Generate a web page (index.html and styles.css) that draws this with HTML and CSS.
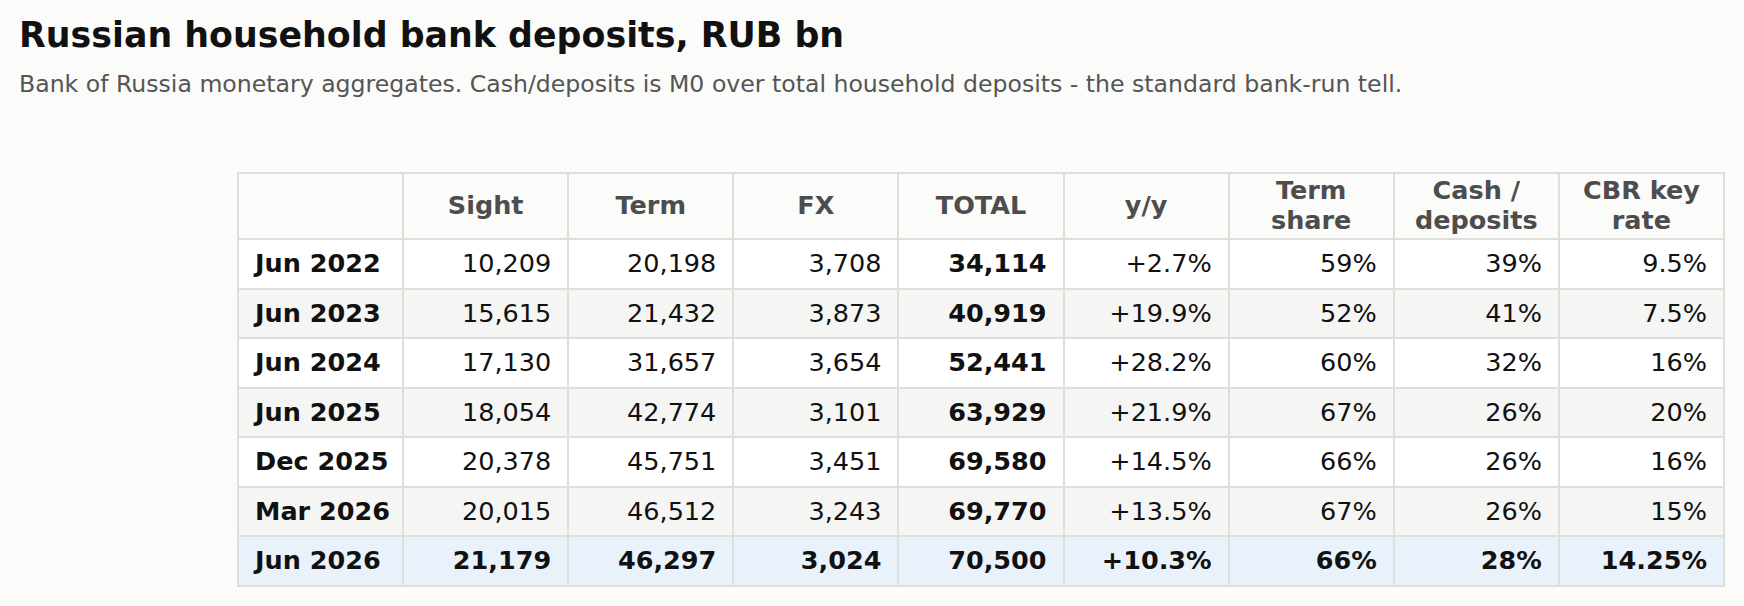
FILE: index.html
```html
<!DOCTYPE html>
<html lang="en">
<head>
<meta charset="utf-8">
<title>Russian household bank deposits</title>
<link rel="stylesheet" href="styles.css">
</head>
<body>
<main class="page">
  <h1 class="title">Russian household bank deposits, RUB bn</h1>
  <p class="subtitle">Bank of Russia monetary aggregates. Cash/deposits is M0 over total household deposits - the standard bank-run tell.</p>
  <div class="table-wrap">
    <table class="data">
      <thead>
        <tr>
          <th></th>
          <th>Sight</th>
          <th>Term</th>
          <th>FX</th>
          <th>TOTAL</th>
          <th>y/y</th>
          <th>Term<br>share</th>
          <th>Cash /<br>deposits</th>
          <th>CBR key<br>rate</th>
        </tr>
      </thead>
      <tbody>
        <tr>
          <td class="label">Jun 2022</td><td>10,209</td><td>20,198</td><td>3,708</td><td class="total">34,114</td><td>+2.7%</td><td>59%</td><td>39%</td><td>9.5%</td>
        </tr>
        <tr>
          <td class="label">Jun 2023</td><td>15,615</td><td>21,432</td><td>3,873</td><td class="total">40,919</td><td>+19.9%</td><td>52%</td><td>41%</td><td>7.5%</td>
        </tr>
        <tr>
          <td class="label">Jun 2024</td><td>17,130</td><td>31,657</td><td>3,654</td><td class="total">52,441</td><td>+28.2%</td><td>60%</td><td>32%</td><td>16%</td>
        </tr>
        <tr>
          <td class="label">Jun 2025</td><td>18,054</td><td>42,774</td><td>3,101</td><td class="total">63,929</td><td>+21.9%</td><td>67%</td><td>26%</td><td>20%</td>
        </tr>
        <tr>
          <td class="label">Dec 2025</td><td>20,378</td><td>45,751</td><td>3,451</td><td class="total">69,580</td><td>+14.5%</td><td>66%</td><td>26%</td><td>16%</td>
        </tr>
        <tr>
          <td class="label">Mar 2026</td><td>20,015</td><td>46,512</td><td>3,243</td><td class="total">69,770</td><td>+13.5%</td><td>67%</td><td>26%</td><td>15%</td>
        </tr>
        <tr class="highlight">
          <td class="label">Jun 2026</td><td>21,179</td><td>46,297</td><td>3,024</td><td class="total">70,500</td><td>+10.3%</td><td>66%</td><td>28%</td><td>14.25%</td>
        </tr>
      </tbody>
    </table>
  </div>
</main>
</body>
</html>
```

FILE: styles.css
```css
html, body {
  margin: 0;
  padding: 0;
  background: #fbfbf9;
}

body {
  font-family: "DejaVu Sans", "Noto Sans", sans-serif;
  color: #111111;
}

.page {
  padding: 15px 19px 0 19px;
}

.title {
  margin: 0;
  font-size: 34.8px;
  line-height: 40px;
  font-weight: bold;
  color: #111111;
}

.subtitle {
  margin: 15px 0 0 0;
  font-size: 23.6px;
  line-height: 28px;
  color: #555555;
}

.table-wrap {
  display: flex;
  justify-content: flex-end;
  margin-top: 74px;
}

.data {
  width: 1488px;
  table-layout: fixed;
  border-collapse: collapse;
  font-size: 25.5px;
  line-height: 29.5px;
}

.data th,
.data td {
  border: 2px solid #dededa;
}

.data th {
  padding: 2px 16px 3px 16px;
  font-weight: bold;
  color: #4d4d4d;
  text-align: center;
  background: transparent;
}

.data td {
  padding: 9px 16px;
  text-align: right;
  white-space: nowrap;
  background: #ffffff;
}

.data tbody tr:nth-child(even) td {
  background: #f5f5f3;
}

.data td.label {
  text-align: left;
  font-weight: bold;
}

.data td.total {
  font-weight: bold;
}

.data tr.highlight td {
  background: #e9f1fb;
  font-weight: bold;
}
```
